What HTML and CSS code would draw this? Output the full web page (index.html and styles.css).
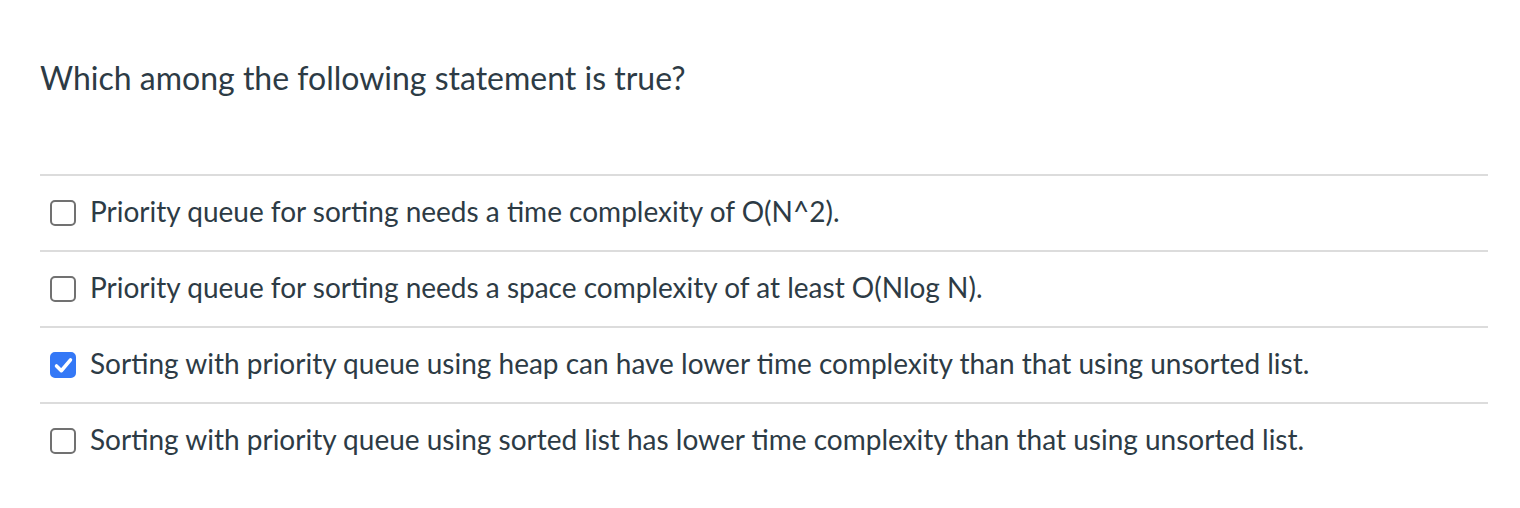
FILE: index.html
```html
<!DOCTYPE html>
<html>
<head>
<meta charset="utf-8">
<link rel="stylesheet" href="styles.css">
</head>
<body>
<div class="quiz">
  <div class="question">Which among the following statement is true?</div>
  <div class="answers">
    <div class="answer">
      <span class="box"></span>
      <span class="label">Priority queue for sorting needs a time complexity of O(N^2).</span>
    </div>
    <div class="answer">
      <span class="box"></span>
      <span class="label">Priority queue for sorting needs a space complexity of at least O(Nlog N).</span>
    </div>
    <div class="answer">
      <span class="box checked"><svg viewBox="0 0 24 24" width="21" height="21"><path d="M4 12.5 L9.5 18 L20 5.5" fill="none" stroke="#fff" stroke-width="4" stroke-linecap="round" stroke-linejoin="round"/></svg></span>
      <span class="label">Sorting with priority queue using heap can have lower time complexity than that using unsorted list.</span>
    </div>
    <div class="answer">
      <span class="box"></span>
      <span class="label">Sorting with priority queue using sorted list has lower time complexity than that using unsorted list.</span>
    </div>
  </div>
</div>
</body>
</html>
```
FILE: styles.css
```css
html, body {
  margin: 0;
  padding: 0;
  background: #ffffff;
}
body {
  font-family: Lato, "Liberation Sans", sans-serif;
  color: #2d3b45;
}
.quiz {
  width: 1448px;
  margin-left: 40px;
}
.question {
  font-size: 32px;
  line-height: 40px;
  padding-top: 58px;
  height: 116px;
  box-sizing: border-box;
}
.answers {
  border-top: 2px solid #dcdcdc;
  margin-top: 58px;
}
.answer {
  display: flex;
  align-items: center;
  height: 74px;
  border-bottom: 2px solid #dcdcdc;
  padding-left: 10px;
  gap: 14px;
}
.answer:last-child {
  border-bottom: none;
}
.box {
  width: 26px;
  height: 26px;
  box-sizing: border-box;
  border: 2px solid #717171;
  border-radius: 5px;
  flex: none;
  display: flex;
  align-items: center;
  justify-content: center;
}
.box.checked {
  background: #3478f6;
  border-color: #3478f6;
}
.label {
  font-size: 28px;
  line-height: 32px;
  position: relative;
  top: -2px;
}
```
